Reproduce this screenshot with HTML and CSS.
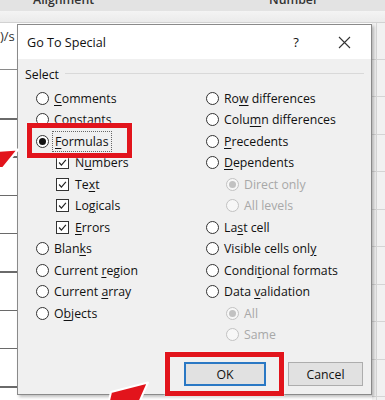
FILE: index.html
```html
<!DOCTYPE html>
<html lang="en">

<head>
    <meta charset="UTF-8">
    <title>Go To Special</title>
    <link rel="stylesheet" href="styles.css">
</head>

<body>
    <div class="sheet">
        <div class="ribbon">
            <span class="ribbon-label ribbon-label-a">Alignment</span>
            <span class="ribbon-label ribbon-label-b">Number</span>
        </div>
        <div class="band"></div>
        <div class="grid">
            <div class="strip-left"><span class="cell-text">)/s</span></div>
            <div class="strip-mid"></div>
            <div class="strip-right"></div>
        </div>
    </div>

    <div class="dialog">
        <div class="titlebar">
            <span class="title">Go To Special</span>
            <span class="help">?</span>
            <span class="close">
                <svg width="13" height="13" viewBox="0 0 13 13"><path d="M1 1L12 12M12 1L1 12" /></svg>
            </span>
        </div>
        <div class="dialog-body">
            <div class="legend"><span>Select</span><i class="legend-rule"></i></div>
            <div class="cols">
                <div class="col">
                    <div class="opt"><span class="radio"></span><span><u>C</u>omments</span></div>
                    <div class="opt"><span class="radio"></span><span>C<u>o</u>nstants</span></div>
                    <div class="opt"><span class="radio on"></span><span class="focus"><u>F</u>ormulas</span></div>
                    <div class="opt sub"><span class="check"><svg viewBox="0 0 13 13"><path d="M2.5 6.5l2.7 3 5.3-6.2" /></svg></span><span>N<u>u</u>mbers</span></div>
                    <div class="opt sub"><span class="check"><svg viewBox="0 0 13 13"><path d="M2.5 6.5l2.7 3 5.3-6.2" /></svg></span><span>Te<u>x</u>t</span></div>
                    <div class="opt sub"><span class="check"><svg viewBox="0 0 13 13"><path d="M2.5 6.5l2.7 3 5.3-6.2" /></svg></span><span>Lo<u>g</u>icals</span></div>
                    <div class="opt sub"><span class="check"><svg viewBox="0 0 13 13"><path d="M2.5 6.5l2.7 3 5.3-6.2" /></svg></span><span><u>E</u>rrors</span></div>
                    <div class="opt"><span class="radio"></span><span>Blan<u>k</u>s</span></div>
                    <div class="opt"><span class="radio"></span><span>Current <u>r</u>egion</span></div>
                    <div class="opt"><span class="radio"></span><span>Current <u>a</u>rray</span></div>
                    <div class="opt"><span class="radio"></span><span>O<u>b</u>jects</span></div>
                </div>
                <div class="col">
                    <div class="opt"><span class="radio"></span><span>Ro<u>w</u> differences</span></div>
                    <div class="opt"><span class="radio"></span><span>Colu<u>m</u>n differences</span></div>
                    <div class="opt"><span class="radio"></span><span><u>P</u>recedents</span></div>
                    <div class="opt"><span class="radio"></span><span><u>D</u>ependents</span></div>
                    <div class="opt sub off"><span class="radio on"></span><span>Direct only</span></div>
                    <div class="opt sub off"><span class="radio"></span><span>All levels</span></div>
                    <div class="opt"><span class="radio"></span><span>La<u>s</u>t cell</span></div>
                    <div class="opt"><span class="radio"></span><span>Visible cells onl<u>y</u></span></div>
                    <div class="opt"><span class="radio"></span><span>Condi<u>t</u>ional formats</span></div>
                    <div class="opt"><span class="radio"></span><span>Data <u>v</u>alidation</span></div>
                    <div class="opt sub off"><span class="radio on"></span><span>All</span></div>
                    <div class="opt sub off"><span class="radio"></span><span>Same</span></div>
                </div>
            </div>
            <div class="buttons">
                <button class="btn btn-ok">OK</button>
                <button class="btn btn-cancel">Cancel</button>
            </div>
        </div>
    </div>

    <div class="mark mark-formulas"></div>
    <div class="mark mark-ok"></div>

    <svg class="arrow arrow-left" width="22" height="24" viewBox="0 0 22 24">
        <path d="M-2 3L18 1.5L3 20L-2 20Z" />
    </svg>
    <svg class="arrow arrow-bottom" width="50" height="22" viewBox="0 0 50 22">
        <path d="M5 11L42 1.5L32 24L2 24Z" />
    </svg>
</body>

</html>
```

FILE: styles.css
```css
* {
    margin: 0;
    padding: 0;
    box-sizing: border-box;
}

body {
    width: 385px;
    height: 400px;
    overflow: hidden;
    position: relative;
    background: #fff;
    font-family: "Open Sans", sans-serif;
    font-size: 12.3px;
    color: #111;
}

/* spreadsheet behind the dialog */
.sheet {
    height: 400px;
    display: flex;
    flex-direction: column;
}

.ribbon {
    height: 11px;
    background: #e3e3e3;
    display: flex;
    overflow: hidden;
}

.ribbon-label {
    display: inline-block;
    margin-top: -8px;
    line-height: 16px;
    font-weight: 600;
    color: #333;
}

.ribbon-label-a {
    margin-left: 33px;
    width: 62px;
}

.ribbon-label-b {
    margin-left: 174px;
}

.band {
    height: 12px;
    background: linear-gradient(to bottom, #f4f4f4, #ebebeb);
    border-bottom: 1px solid #d2d2d2;
}

.grid {
    flex: 1;
    display: flex;
}

.strip-left {
    width: 17px;
    background:
        linear-gradient(to bottom, transparent 46px, #8a8a8a 46px, #8a8a8a 47.5px, transparent 47.5px) no-repeat,
        repeating-linear-gradient(to bottom,
            #6a6a6a 0,
            #6a6a6a 1.5px,
            transparent 1.5px,
            transparent 38.33px) 0 95px / 100% 100% no-repeat;
}

.cell-text {
    display: block;
    font-size: 13px;
    line-height: 20px;
    margin-top: 3px;
    color: #333;
}

.strip-mid {
    flex: 1;
}

.strip-right {
    width: 13px;
    background:
        linear-gradient(to right, transparent 4px, #d6d6d6 4px, #d6d6d6 5px, transparent 5px),
        repeating-linear-gradient(to bottom,
            #f1f1f1 0,
            #f1f1f1 36px,
            #d4d4d4 36px,
            #d4d4d4 37px,
            #f1f1f1 37px,
            #f1f1f1 37.5px);
}

/* dialog */
.dialog {
    position: absolute;
    left: 17px;
    top: 24px;
    width: 355px;
    height: 371px;
    border: 1px solid #8a8a8a;
    background: #f0f0f0;
    box-shadow: 2px 2px 3px rgba(0, 0, 0, .25);
    display: flex;
    flex-direction: column;
}

.titlebar {
    height: 34px;
    background: #fff;
    display: flex;
    align-items: center;
    padding: 0 19px 0 9px;
}

.title {
    font-size: 12.6px;
    flex: 1;
}

.help {
    width: 16px;
    text-align: center;
    font-size: 13px;
    margin-right: 34px;
}

.close {
    width: 14px;
    height: 13px;
    display: flex;
}

.close path {
    stroke: #333;
    stroke-width: 1.1;
    fill: none;
}

.dialog-body {
    flex: 1;
    display: flex;
    flex-direction: column;
    padding: 0 7px 0 7px;
}

.legend {
    height: 16px;
    margin-top: 8px;
    line-height: 16px;
    display: flex;
    align-items: center;
}

.legend-rule {
    flex: 1;
    height: 1px;
    background: #d9d9d9;
    margin: 0 0 0 6px;
    position: relative;
    top: -2px;
}

.cols {
    margin-top: 4.25px;
    padding-left: 11px;
    display: grid;
    grid-template-columns: 170px 1fr;
}

.opt {
    height: 21.5px;
    display: flex;
    align-items: center;
    gap: 5px;
}

.opt.sub {
    padding-left: 20px;
}

.opt.sub .check + span {
    margin-left: 1px;
}

.opt.off {
    color: #a8a8a8;
}

.opt u {
    text-underline-offset: 2px;
}

.radio {
    width: 13px;
    height: 13px;
    border: 1px solid #333;
    border-radius: 50%;
    background: #fff;
    display: flex;
    align-items: center;
    justify-content: center;
    flex: none;
}

.radio.on::after {
    content: "";
    width: 7px;
    height: 7px;
    border-radius: 50%;
    background: #111;
}

.opt.off .radio {
    border-color: #c2c2c2;
    background: #f7f7f7;
}

.opt.off .radio.on::after {
    background: #c2c2c2;
}

.check {
    width: 13px;
    height: 13px;
    border: 1px solid #333;
    background: #fff;
    display: flex;
    flex: none;
}

.check svg {
    width: 11px;
    height: 11px;
}

.check path {
    fill: none;
    stroke: #222;
    stroke-width: 1.4;
}

.focus {
    outline: 1px dotted #666;
    outline-offset: 1px;
    padding: 0 1px;
}

.buttons {
    margin-top: auto;
    margin-bottom: 8px;
    display: flex;
    justify-content: flex-end;
    gap: 22px;
    padding-right: 1px;
}

.btn {
    height: 24px;
    font-family: inherit;
    font-size: 12.3px;
    color: #111;
    background: #e1e1e1;
    border: 1px solid #adadad;
}

.btn-ok {
    width: 82px;
    border: 2px solid #2a78c4;
}

.btn-cancel {
    width: 75px;
}

/* annotations drawn over the screenshot */
.mark {
    position: absolute;
    border: 5px solid #e2141c;
    box-shadow: 0 0 2px rgba(255, 255, 255, .9), inset 0 0 1px rgba(255, 255, 255, .6);
}

.mark-formulas {
    left: 27px;
    top: 123px;
    width: 105px;
    height: 35px;
}

.mark-ok {
    left: 165px;
    top: 352px;
    width: 119px;
    height: 44px;
}

.arrow {
    position: absolute;
    overflow: visible;
}

.arrow path {
    fill: #e2141c;
    stroke: #fff;
    stroke-width: 2;
    stroke-linejoin: round;
}

.arrow-left {
    left: 0;
    top: 148px;
}

.arrow-bottom {
    left: 106px;
    top: 381px;
}
```
